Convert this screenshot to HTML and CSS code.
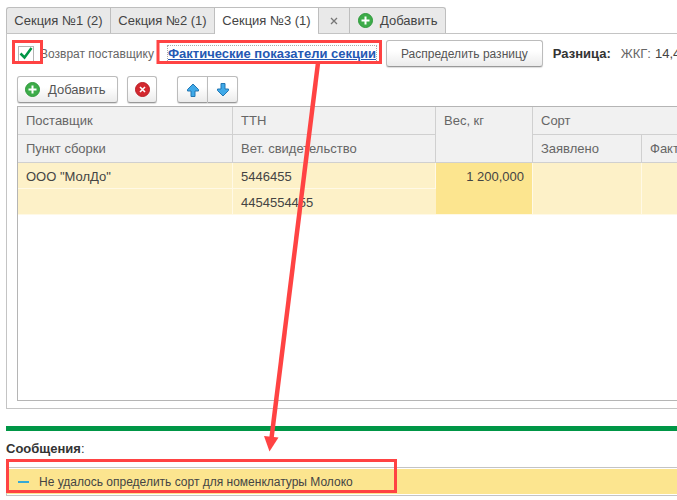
FILE: index.html
```
<!DOCTYPE html>
<html lang="ru">
<head>
<meta charset="utf-8">
<title>Секции</title>
<link rel="stylesheet" href="styles.css">
</head>
<body>
<main class="page">
  <nav class="tabs">
    <button class="tab" type="button">Секция №1 (2)</button>
    <button class="tab" type="button">Секция №2 (1)</button>
    <button class="tab tab-active" type="button">Секция №3 (1)</button>
    <button class="tab tab-close" type="button" aria-label="Закрыть"><svg width="8" height="8" viewBox="0 0 8 8"><path d="M1 1l6 6M7 1L1 7" stroke="#777" stroke-width="1.3"/></svg></button>
    <button class="tab tab-add" type="button"><svg width="15" height="15" viewBox="0 0 15 15"><circle cx="7.500" cy="7.500" r="7" fill="#3dac49" stroke="#2f993b"/><path d="M7.500 3.500v8M3.500 7.500h8" stroke="#fff" stroke-width="2"/></svg>Добавить</button>
  </nav>
  <section class="panel">
    <div class="options">
      <label class="check"><input type="checkbox" checked>Возврат поставщику</label>
      <a class="link" href="#messages">Фактические показатели секции</a>
      <button class="btn btn-wide" type="button">Распределить разницу</button>
      <strong class="diff">Разница:</strong>
      <span class="fat">ЖКГ:</span>
      <span class="value">14,4</span>
    </div>
    <div class="commands">
      <button class="btn btn-add" type="button"><svg width="15" height="15" viewBox="0 0 15 15"><circle cx="7.500" cy="7.500" r="7" fill="#3dac49" stroke="#2f993b"/><path d="M7.500 3.500v8M3.500 7.500h8" stroke="#fff" stroke-width="2"/></svg>Добавить</button>
      <button class="btn btn-icon" type="button" aria-label="Удалить"><svg width="15" height="15" viewBox="0 0 15 15"><circle cx="7.500" cy="7.500" r="7" fill="#d3282f" stroke="#b91e25"/><path d="M5 5l5 5M10 5l-5 5" stroke="#fff" stroke-width="1.600"/></svg></button>
      <div class="group">
        <button class="btn btn-icon" type="button" aria-label="Вверх"><svg width="12" height="14" viewBox="0 0 12 14"><path d="M6 1L11.500 6.500V8H8v5.500H4V8H.5V6.500z" fill="#3fa9e8" stroke="#2377b3" stroke-linejoin="round"/></svg></button>
        <button class="btn btn-icon" type="button" aria-label="Вниз"><svg width="12" height="14" viewBox="0 0 12 14"><path d="M6 13L.5 7.500V6H4V.5h4V6h3.500v1.500z" fill="#3fa9e8" stroke="#2377b3" stroke-linejoin="round"/></svg></button>
      </div>
    </div>
    <div class="grid">
      <table>
        <colgroup><col class="c-supplier"><col class="c-doc"><col class="c-weight"><col class="c-sort"><col></colgroup>
        <thead>
          <tr><th>Поставщик</th><th>ТТН</th><th rowspan="2">Вес, кг</th><th colspan="2">Сорт</th></tr>
          <tr><th>Пункт сборки</th><th>Вет. свидетельство</th><th>Заявлено</th><th>Факт</th></tr>
        </thead>
        <tbody>
          <tr><td>ООО "МолДо"</td><td>5446455</td><td class="weight" rowspan="2">1 200,000</td><td rowspan="2"></td><td rowspan="2"></td></tr>
          <tr><td></td><td>4454554455</td></tr>
        </tbody>
      </table>
    </div>
  </section>
  <hr class="divider">
  <section class="messages" id="messages">
    <h2><b>Сообщения</b>:</h2>
    <ul><li><i class="dash"></i>Не удалось определить сорт для номенклатуры Молоко</li></ul>
  </section>
  <svg class="marks" width="677" height="500" viewBox="0 0 677 500" fill="none" stroke="#ff4343" aria-hidden="true">
    <rect x="13.500" y="41.500" width="28" height="21" stroke-width="3"/>
    <rect x="158" y="41.500" width="222.500" height="21" stroke-width="3"/>
    <rect x="7.500" y="460.500" width="388" height="31" stroke-width="3"/>
    <path d="M318 63L271.500 438" stroke-width="4.500"/>
    <path d="M264 436l14.500 1.500-9 14z" fill="#ff4343" stroke="none"/>
  </svg>
</main>
</body>
</html>
```
FILE: styles.css
```
* { box-sizing: border-box; }
body {
  margin: 0;
  background: #fff;
  color: #444;
  font: 13px/16px "Liberation Sans", Arial, sans-serif;
}
.page {
  position: relative;
  padding: 7px 0 4px 6px;
  overflow: hidden;
}
button { font: inherit; color: #555; padding: 0; white-space: nowrap; }
svg { display: block; flex: none; }

.tabs { display: flex; }
.tab {
  width: 104px;
  height: 26px;
  border: 1px solid #bebebe;
  border-right: 0;
  border-bottom: 0;
  background: #e9e9e9;
  color: #444;
}
.tab:first-child { border-top-left-radius: 3px; }
.tab-active { height: 27px; margin-bottom: -1px; background: #fff; position: relative; }
.tab-close { width: 31px; padding: 0 11px; }
.tab-add {
  display: flex;
  align-items: center;
  gap: 7px;
  width: auto;
  padding: 0 8px;
  border-right: 1px solid #bebebe;
  border-top-right-radius: 3px;
}

.panel {
  border: 1px solid #c4c4c4;
  border-right: 0;
  padding: 6px 0 7px 10px;
}
.options { display: flex; align-items: center; white-space: nowrap; }
.check {
  display: flex;
  align-items: center;
  gap: 6px;
  flex: none;
  width: 151px;
  color: #666;
  font-size: 12px;
}
.check input {
  appearance: none;
  width: 16px;
  height: 16px;
  margin: 0 0 0 1px;
  border: 1px solid #b4b4b4;
  background: #fff;
}
.check input:checked {
  background: #fff url('data:image/svg+xml,<svg xmlns="http://www.w3.org/2000/svg" viewBox="0 0 14 14"><path d="M1.500 6.500L5.500 10.500 12.500 1" fill="none" stroke="%23009646" stroke-width="2.500"/></svg>') center / 14px no-repeat;
}
.link {
  color: #2458b3;
  font-weight: bold;
  outline: 1px dotted #aaa;
}
.btn {
  height: 27px;
  border: 1px solid #bcbcbc;
  border-bottom-color: #999;
  border-radius: 3px;
  background: linear-gradient(#fff 40%, #ebebeb);
  box-shadow: 0 1px 1px #ddd;
}
.btn-wide { margin-left: 10px; padding: 0 14px; font-size: 12px; }
.diff { margin-left: 10px; color: #333; }
.fat { margin-left: 10px; color: #666; }
.value { margin-left: 4px; }

.commands { display: flex; margin: 9px 0 3px; }
.btn-add { display: flex; align-items: center; gap: 8px; padding: 0 12px 0 7px; }
.btn-icon { display: flex; align-items: center; justify-content: center; width: 30px; }
.commands > .btn-icon { margin-left: 9px; }
.group { display: flex; margin-left: 20px; }
.group .btn:first-child { border-radius: 3px 0 0 3px; border-right: 0; }
.group .btn:last-child { width: 31px; border-radius: 0 3px 3px 0; }

.grid {
  min-height: 295px;
  border: 1px solid #b5b5b5;
  border-right: 0;
}
table { width: 100%; table-layout: fixed; border-collapse: separate; border-spacing: 0; }
.c-supplier { width: 215px; }
.c-doc { width: 203px; }
.c-weight { width: 97px; }
.c-sort { width: 109px; }
th {
  height: 28px;
  padding: 6px 8px 5px;
  border: solid #d0d0d0;
  border-width: 0 1px 1px 0;
  background: #f1f1f1;
  color: #666;
  font-weight: normal;
  text-align: left;
  vertical-align: top;
  white-space: nowrap;
}
td {
  height: 26px;
  padding: 6px 8px 3px;
  border: solid #fff9e6;
  border-width: 0 1px 1px 0;
  background: #fdf1c8;
  vertical-align: top;
}
th:last-child, td:last-child { border-right-width: 0; }
.weight { background: #fce58f; text-align: right; }

.divider { height: 5px; margin: 17px 0 0; border: 0; background: #009646; }
.messages h2 { margin: 10px 0; color: #333; font-size: 13px; font-weight: normal; }
.messages ul {
  margin: 0;
  padding: 1px 0;
  border: solid #c4c4c4;
  border-width: 1px 0 1px 1px;
  list-style: none;
}
.messages li {
  display: flex;
  align-items: center;
  gap: 10px;
  height: 25px;
  padding-left: 11px;
  background: #fce58f;
  font-size: 12px;
}
.dash { width: 11px; height: 2px; background: #35a9d6; }
.marks { position: absolute; left: 0; top: 0; }
```
